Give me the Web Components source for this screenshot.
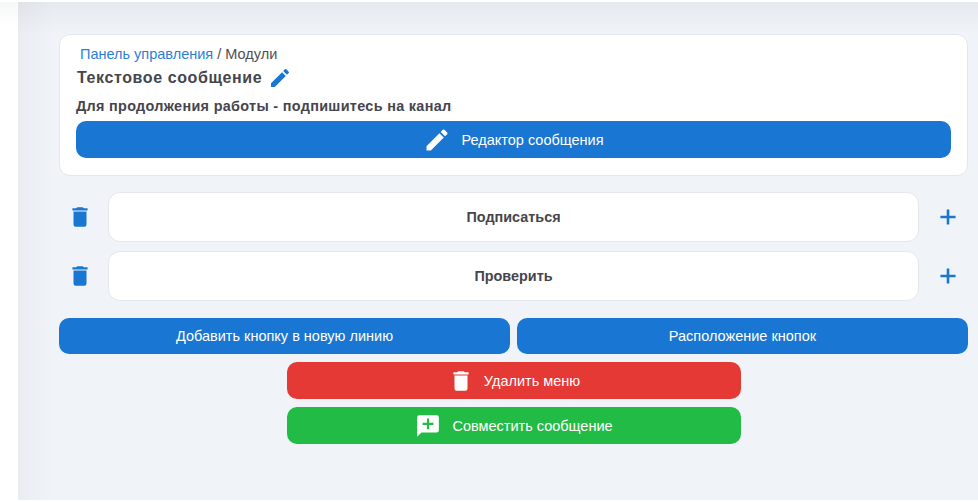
<!DOCTYPE html>
<html lang="ru"><head><meta charset="utf-8"><title>Текстовое сообщение</title>
<style>
html,body{margin:0;padding:0;height:100%}
html{background:#fff}
body{font-family:"Liberation Sans",Arial,sans-serif;color:#45454d;
background:linear-gradient(180deg,#fff 2px,#f6f7f7 2px,#fff 26px) no-repeat 0 0/18px 30px}
</style></head><body>
<x-page>
  <x-card>
    <x-crumbs><a slot="link">Панель управления</a><span slot="current">Модули</span></x-crumbs>
    <x-title>Текстовое сообщение</x-title>
    <x-note>Для продолжения работы - подпишитесь на канал</x-note>
    <x-btn color="#1976d2" icon="pencil" style="--mt:6px">Редактор сообщения</x-btn>
  </x-card>
  <x-rows>
    <x-row>Подписаться</x-row>
    <x-row>Проверить</x-row>
  </x-rows>
  <x-pair>
    <x-btn color="#1976d2" style="--h:36px">Добавить кнопку в новую линию</x-btn>
    <x-btn color="#1976d2" style="--h:36px">Расположение кнопок</x-btn>
  </x-pair>
  <x-stack>
    <x-btn color="#e53935" icon="trash">Удалить меню</x-btn>
    <x-btn color="#22bb46" icon="comment">Совместить сообщение</x-btn>
  </x-stack>
</x-page>
<script>
const ICONS={
 pencil:'<path d="M3 17.25V21h3.75L17.81 9.94l-3.75-3.75L3 17.25zM20.71 7.04a1 1 0 0 0 0-1.41l-2.34-2.34a1 1 0 0 0-1.41 0l-1.83 1.83 3.75 3.75 1.83-1.83z"/>',
 trash:'<path d="M6 19a2 2 0 0 0 2 2h8a2 2 0 0 0 2-2V7H6v12zM19 4h-3.5l-1-1h-5l-1 1H5v2h14V4z"/>',
 comment:'<path d="M20 2H4a2 2 0 0 0-2 2v18l4-4h14a2 2 0 0 0 2-2V4a2 2 0 0 0-2-2zm-3 9h-4v4h-2v-4H7V9h4V5h2v4h4v2z"/>',
 plus:'<path d="M19 13.2h-5.8V19h-2.4v-5.8H5v-2.4h5.8V5h2.4v5.8H19v2.4z"/>'
};
const SIZES={pencil:[28,10],trash:[26,10],comment:[26,11]};
const svg=(n,s,c)=>`<svg width="${s}" height="${s}" viewBox="0 0 24 24" fill="${c}" aria-hidden="true">${ICONS[n]}</svg>`;
function def(name,html,build){
  customElements.define(name,class extends HTMLElement{
    constructor(){super();this.attachShadow({mode:'open'}).innerHTML=html;}
    connectedCallback(){if(build)build(this);}
  });
}
def('x-page',`<style>
:host{display:block;box-sizing:border-box;height:498px;margin:2px 0 2px 18px;padding:32px 10px 0 41px;
background:linear-gradient(180deg,rgba(30,40,50,.05),rgba(30,40,50,0) 32px),linear-gradient(90deg,#e9ecf0 0,#f0f4f8 34px),#f0f4f8;overflow:hidden}
</style><slot></slot>`);
def('x-card',`<style>
:host{display:block;box-sizing:border-box;height:142px;background:#fff;border:1px solid #e4e7eb;border-radius:11px;padding:11px 16px 0}
</style><slot></slot>`);
def('x-crumbs',`<style>
:host{display:block;font-size:14.5px;line-height:17px;padding-left:4px;color:#4f4f55}
::slotted(a){color:#2b7fd9}
</style><slot name="link"></slot> / <slot name="current"></slot>`);
def('x-title',`<style>
:host{display:flex;align-items:center;gap:6px;height:24px;margin:3px 0 0 1px;font-size:16px;font-weight:700;letter-spacing:.6px;color:#45454d}
svg{display:block}
</style><span><slot></slot></span>${svg('pencil',24,'#1976d2')}`);
def('x-note',`<style>
:host{display:block;margin-top:8px;font-size:14.4px;line-height:17px;font-weight:700;letter-spacing:.32px;color:#45454d}
</style><slot></slot>`);
def('x-btn',`<style>
:host{display:flex;align-items:center;justify-content:center;box-sizing:border-box;height:var(--h,37px);
border-radius:10px;color:#fff;font-size:14.5px;margin-top:var(--mt,0);background:var(--bg)}
svg{display:block;flex:none}
</style><span id="i" style="display:contents"></span><span><slot></slot></span>`,
el=>{el.style.setProperty('--bg',el.getAttribute('color'));
 const n=el.getAttribute('icon');
 if(n){el.style.gap=SIZES[n][1]+'px';el.shadowRoot.getElementById('i').innerHTML=svg(n,SIZES[n][0],'#fff');}});
def('x-rows',`<style>:host{display:grid;gap:9px;margin-top:16px}</style><slot></slot>`);
def('x-row',`<style>
:host{display:grid;grid-template-columns:49px 1fr 49px;align-items:center;height:50px}
.i{display:flex;justify-content:center;padding-right:8px}
.p{display:flex;justify-content:center;padding-left:9px}
.f{box-sizing:border-box;height:100%;background:#fff;border:1px solid #e4e7eb;border-radius:12px;display:flex;align-items:center;justify-content:center;
font-size:14.4px;font-weight:700;color:#45454d}
svg{display:block}
</style><div class="i">${svg('trash',26,'#1976d2')}</div><div class="f"><slot></slot></div><div class="p">${svg('plus',26,'#1976d2')}</div>`);
def('x-pair',`<style>:host{display:grid;grid-template-columns:451px 451px;gap:7px;margin-top:17px}</style><slot></slot>`);
def('x-stack',`<style>:host{display:grid;gap:8px;width:454px;margin:8px 0 0 228px}</style><slot></slot>`);
</script>
</body></html>
